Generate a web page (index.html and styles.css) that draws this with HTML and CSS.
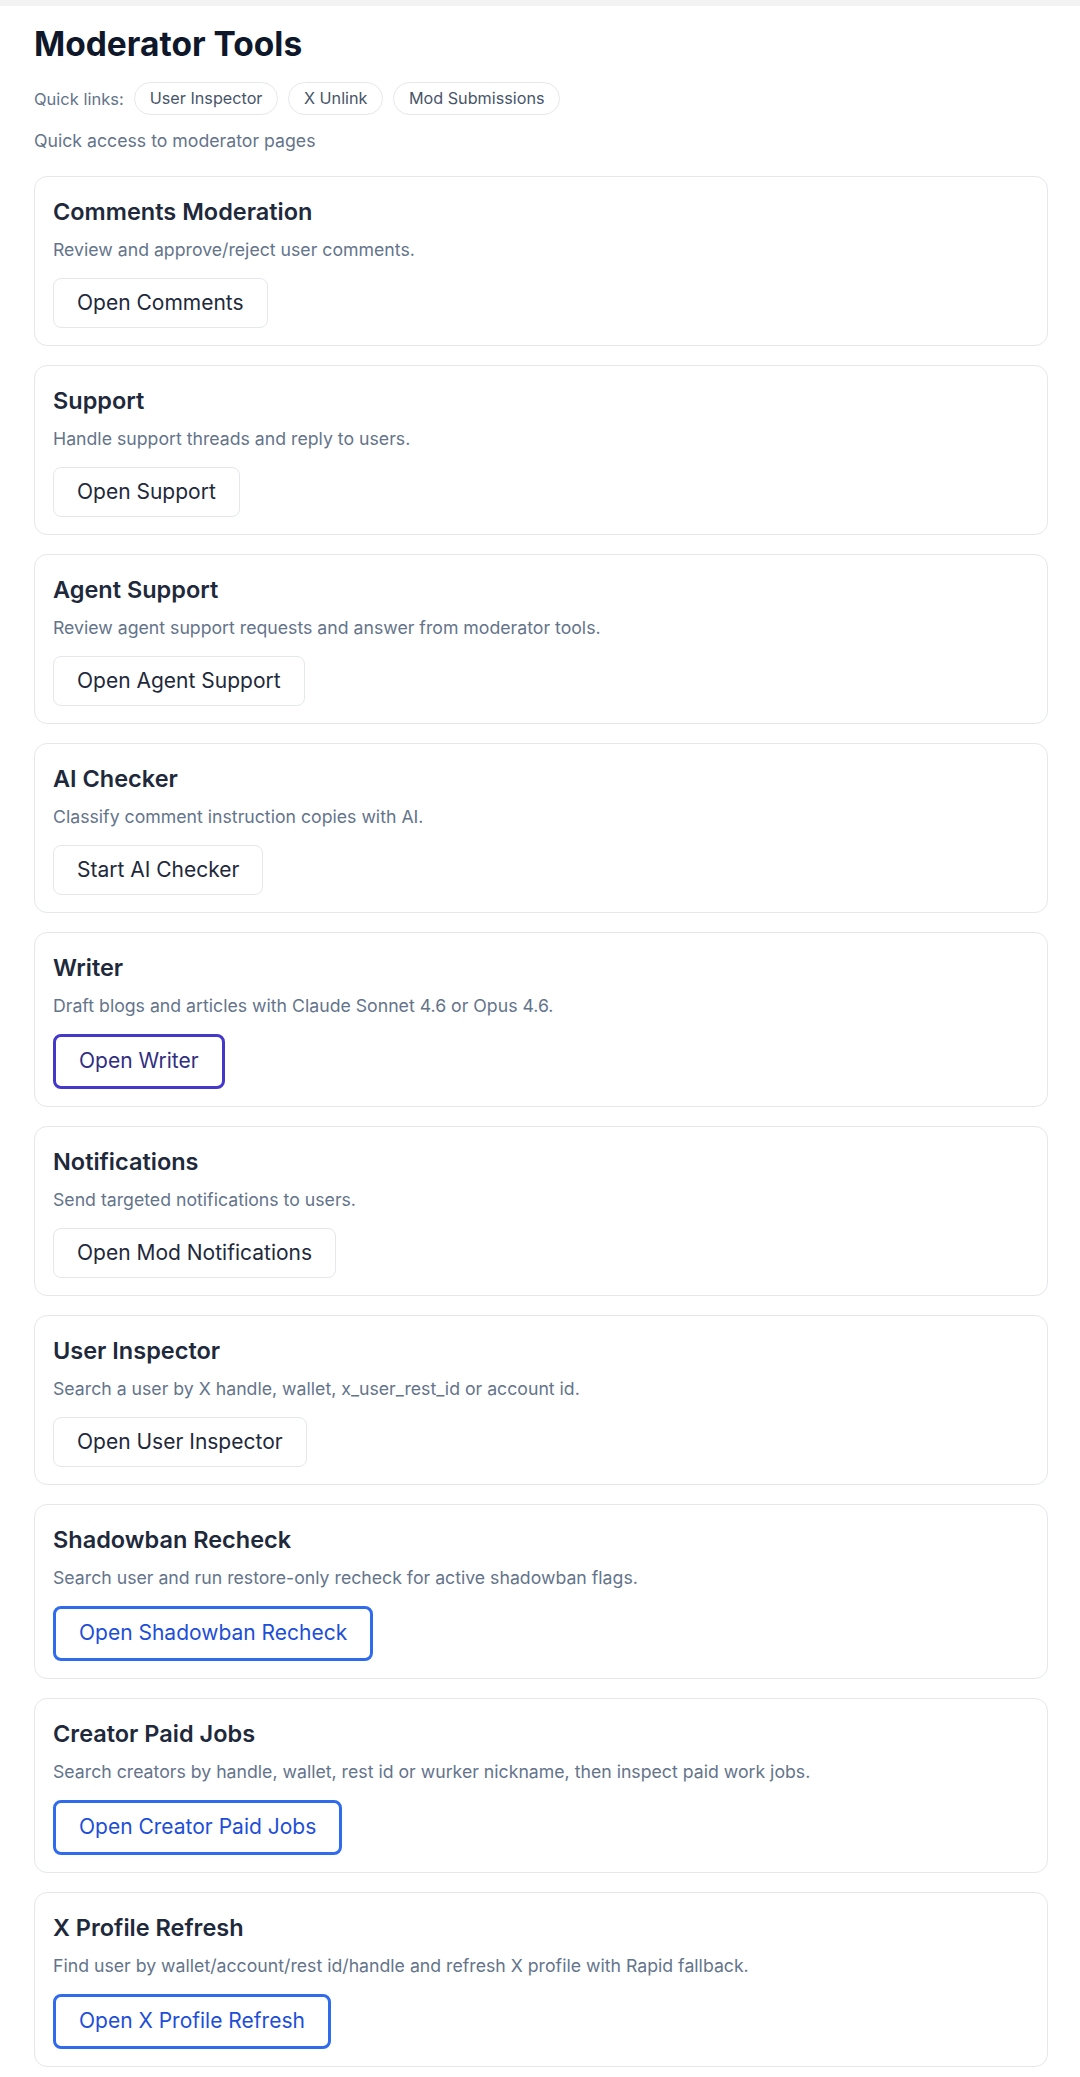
FILE: index.html
```html
<!DOCTYPE html>
<html lang="en">
<head>
    <meta charset="UTF-8">
    <meta name="viewport" content="width=device-width, initial-scale=1.0">
    <title>Moderator Tools</title>
    <link rel="stylesheet" href="styles.css">
</head>
<body>
    <div class="topbar"></div>

    <main class="page">
        <h1>Moderator Tools</h1>

        <div class="quick-links">
            <span class="quick-label">Quick links:</span>
            <a class="pill" href="#">User Inspector</a>
            <a class="pill" href="#">X Unlink</a>
            <a class="pill" href="#">Mod Submissions</a>
        </div>

        <p class="subtitle">Quick access to moderator pages</p>

        <div class="tools">
            <section class="card">
                <h2>Comments Moderation</h2>
                <p>Review and approve/reject user comments.</p>
                <button class="btn">Open Comments</button>
            </section>

            <section class="card">
                <h2>Support</h2>
                <p>Handle support threads and reply to users.</p>
                <button class="btn">Open Support</button>
            </section>

            <section class="card">
                <h2>Agent Support</h2>
                <p>Review agent support requests and answer from moderator tools.</p>
                <button class="btn">Open Agent Support</button>
            </section>

            <section class="card">
                <h2>AI Checker</h2>
                <p>Classify comment instruction copies with AI.</p>
                <button class="btn">Start AI Checker</button>
            </section>

            <section class="card">
                <h2>Writer</h2>
                <p>Draft blogs and articles with Claude Sonnet 4.6 or Opus 4.6.</p>
                <button class="btn btn-indigo">Open Writer</button>
            </section>

            <section class="card">
                <h2>Notifications</h2>
                <p>Send targeted notifications to users.</p>
                <button class="btn">Open Mod Notifications</button>
            </section>

            <section class="card">
                <h2>User Inspector</h2>
                <p>Search a user by X handle, wallet, x_user_rest_id or account id.</p>
                <button class="btn">Open User Inspector</button>
            </section>

            <section class="card">
                <h2>Shadowban Recheck</h2>
                <p>Search user and run restore-only recheck for active shadowban flags.</p>
                <button class="btn btn-blue">Open Shadowban Recheck</button>
            </section>

            <section class="card">
                <h2>Creator Paid Jobs</h2>
                <p>Search creators by handle, wallet, rest id or wurker nickname, then inspect paid work jobs.</p>
                <button class="btn btn-blue">Open Creator Paid Jobs</button>
            </section>

            <section class="card">
                <h2>X Profile Refresh</h2>
                <p>Find user by wallet/account/rest id/handle and refresh X profile with Rapid fallback.</p>
                <button class="btn btn-blue">Open X Profile Refresh</button>
            </section>
        </div>
    </main>
</body>
</html>
```

FILE: styles.css
```css
body {
    margin: 0;
    font-family: Inter, "Noto Sans", sans-serif;
    background-color: #fff;
    color: #0f172a;
}
.topbar {
    height: 6px;
    background-color: #f3f3f3;
}
.page {
    padding: 0 32px 13px 34px;
}
h1 {
    margin: 18px 0 0;
    font-size: 33.5px;
    line-height: 40px;
    font-weight: 700;
    color: #0f172a;
}
.quick-links {
    display: flex;
    align-items: center;
    gap: 10.5px;
    margin-top: 18px;
}
.quick-label {
    font-size: 16.5px;
    color: #64748b;
}
.pill {
    padding: 5px 14.5px;
    border: 1px solid #e5e7eb;
    border-radius: 999px;
    font-size: 16.2px;
    line-height: 21px;
    font-weight: 400;
    color: #475569;
    text-decoration: none;
}
.subtitle {
    margin: 13px 0 0;
    font-size: 17.7px;
    line-height: 26px;
    color: #64748b;
}
.tools {
    display: flex;
    flex-direction: column;
    gap: 19.5px;
    margin-top: 22px;
}
.card {
    border: 1px solid #e5e7eb;
    border-radius: 13px;
    padding: 19px 18px 17px;
}
.card h2 {
    margin: 0;
    font-size: 23.5px;
    line-height: 32px;
    font-weight: 600;
    color: #1e293b;
}
.card p {
    margin: 8.5px 0 0;
    font-size: 17.7px;
    line-height: 26px;
    color: #64748b;
}
.btn {
    display: inline-block;
    margin-top: 15px;
    padding: 10px 23px;
    border: 1px solid #e5e7eb;
    border-radius: 8px;
    background-color: #fff;
    font-family: inherit;
    font-size: 21px;
    line-height: 28px;
    font-weight: 400;
    color: #1e293b;
    cursor: pointer;
}
.btn-blue, .btn-indigo {
    padding: 10.5px 23px;
    border-width: 3px;
}
.btn-blue {
    border-color: #2f6bec;
    color: #1d4ed8;
}
.btn-indigo {
    border-color: #4338ca;
    color: #312e81;
}
```
